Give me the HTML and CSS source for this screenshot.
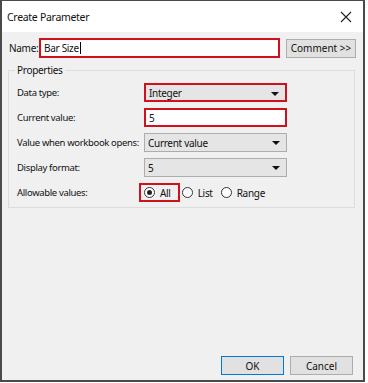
FILE: index.html
```html
<!DOCTYPE html>
<html lang="en">
<head>
    <meta charset="UTF-8">
    <meta name="viewport" content="width=device-width, initial-scale=1.0">
    <title>Create Parameter</title>
    <link rel="stylesheet" href="styles.css">
</head>
<body>
    <div class="dialog">
        <div class="titlebar">
            <span class="title">Create Parameter</span>
            <svg class="close" width="12" height="12" viewBox="0 0 12 12">
                <path d="M1 1 L11 11 M11 1 L1 11" stroke="#222" stroke-width="1.1" fill="none"/>
            </svg>
        </div>

        <div class="content">
            <div class="name-row">
                <span class="name-label">Name:</span>
                <div class="textbox name-box highlight">Bar Size<span class="caret"></span></div>
                <button class="btn comment-btn">Comment &gt;&gt;</button>
            </div>

            <fieldset class="props">
                <legend>Properties</legend>

                <div class="row">
                    <span class="label">Data type:</span>
                    <div class="select highlight">Integer<span class="arrow"></span></div>
                </div>
                <div class="row">
                    <span class="label">Current value:</span>
                    <div class="textbox highlight">5</div>
                </div>
                <div class="row">
                    <span class="label">Value when workbook opens:</span>
                    <div class="select">Current value<span class="arrow"></span></div>
                </div>
                <div class="row">
                    <span class="label">Display format:</span>
                    <div class="select">5<span class="arrow"></span></div>
                </div>
                <div class="row">
                    <span class="label">Allowable values:</span>
                    <div class="radios">
                        <span class="radio-item radio-all"><span class="radio checked"></span>All</span>
                        <span class="radio-item"><span class="radio"></span>List</span>
                        <span class="radio-item"><span class="radio"></span>Range</span>
                    </div>
                </div>
            </fieldset>

            <div class="footer">
                <button class="btn ok-btn">OK</button>
                <button class="btn">Cancel</button>
            </div>
        </div>
    </div>
</body>
</html>
```

FILE: styles.css
```css
* {
    margin: 0;
    padding: 0;
    box-sizing: border-box;
}

body {
    font-family: "Noto Sans", "Open Sans", sans-serif;
    font-size: 10px;
    letter-spacing: -0.3px;
    color: #111;
    background: #fff;
}

.dialog {
    width: 365px;
    height: 382px;
    border: 2px solid #4a4a4a;
    border-top-width: 1px;
    background: #f0f0f0;
    display: flex;
    flex-direction: column;
}

.titlebar {
    height: 31px;
    background: #fff;
    display: flex;
    align-items: center;
    justify-content: space-between;
    padding: 0 11px 0 5px;
}

.title {
    font-size: 10.5px;
    color: #111;
}

.content {
    flex: 1;
    display: flex;
    flex-direction: column;
    padding: 6px 0 0 6px;
}

.name-row {
    display: flex;
    align-items: center;
    height: 20px;
}

.name-label {
    width: 31px;
    padding-left: 1px;
}

.label {
    white-space: nowrap;
    font-size: 9.5px;
    letter-spacing: -0.35px;
}

.textbox,
.select {
    height: 19px;
    border: 1px solid #adadad;
    background: #fff;
    display: flex;
    align-items: center;
    padding-left: 3px;
    position: relative;
}

.highlight {
    border: 2px solid #d0101a;
}

.name-box {
    width: 241px;
    height: 20px;
}

.caret {
    width: 1px;
    height: 12px;
    background: #000;
    margin-left: 1px;
}

.btn {
    font-family: inherit;
    font-size: 10px;
    letter-spacing: 0;
    color: #111;
    background: #e1e1e1;
    border: 1px solid #adadad;
    height: 19px;
}

.comment-btn {
    width: 70px;
    margin-left: 6px;
}

.props {
    margin: 5px 8px 0 0;
    border: 1px solid #dcdcdc;
    padding: 6px 8px 5px 8px;
}

.props legend {
    padding: 0 2px;
    margin-left: -2px;
}

.row {
    display: grid;
    grid-template-columns: 127px 143px;
    align-items: center;
    height: 19px;
    margin-bottom: 6px;
}

.row:last-child {
    margin-bottom: 0;
}

.select {
    background: #e5e5e5;
}

.arrow {
    position: absolute;
    right: 6px;
    top: 7px;
    border-left: 4px solid transparent;
    border-right: 4px solid transparent;
    border-top: 4px solid #111;
}

.radios {
    display: flex;
    align-items: center;
    margin-left: -5px;
}

.radio-item {
    display: flex;
    align-items: center;
    height: 19px;
    margin-right: 8px;
}

.radio-all {
    border: 2px solid #d0101a;
    padding: 0 7px 0 3px;
    margin-right: 2px;
}

.radio {
    width: 11px;
    height: 11px;
    border: 1px solid #333;
    border-radius: 50%;
    background: #fff;
    margin-right: 5px;
    position: relative;
}

.radio.checked::after {
    content: '';
    position: absolute;
    top: 2px;
    left: 2px;
    width: 5px;
    height: 5px;
    border-radius: 50%;
    background: #222;
}

.footer {
    margin-top: auto;
    display: flex;
    justify-content: flex-end;
    gap: 6px;
    padding: 0 10px 5px 0;
}

.footer .btn {
    width: 63px;
    height: 19px;
}

.ok-btn {
    border-color: #0078d7;
}
```
